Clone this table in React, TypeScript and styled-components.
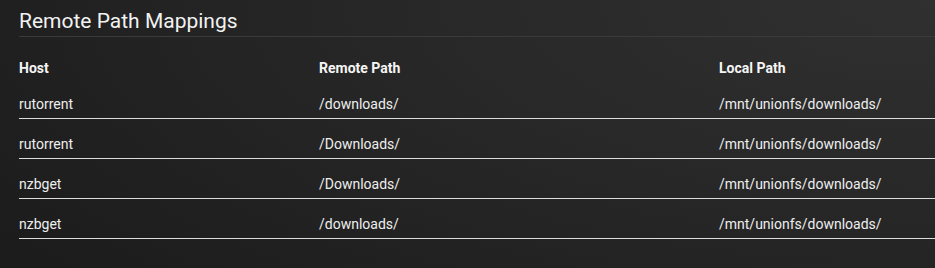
import React from 'react';
import styled, { createGlobalStyle } from 'styled-components';

const GlobalStyle = createGlobalStyle`
  html, body {
    margin: 0;
    padding: 0;
  }
  body {
    background: #1d1d1d;
    font-family: Roboto, "Liberation Sans", sans-serif;
  }
`;

type Mapping = {
  host: string;
  remotePath: string;
  localPath: string;
};

const mappings: Mapping[] = [
  { host: 'rutorrent', remotePath: '/downloads/', localPath: '/mnt/unionfs/downloads/' },
  { host: 'rutorrent', remotePath: '/Downloads/', localPath: '/mnt/unionfs/downloads/' },
  { host: 'nzbget', remotePath: '/Downloads/', localPath: '/mnt/unionfs/downloads/' },
  { host: 'nzbget', remotePath: '/downloads/', localPath: '/mnt/unionfs/downloads/' },
];

const App = () => {
  return (
    <Page>
      <GlobalStyle />
      <Section>
        <Legend>Remote Path Mappings</Legend>
        <Table>
          <HeaderRow>
            <HeadCell>Host</HeadCell>
            <HeadCell>Remote Path</HeadCell>
            <HeadCell>Local Path</HeadCell>
          </HeaderRow>
          {mappings.map((m, i) => (
            <Row key={i}>
              <Cell>{m.host}</Cell>
              <Cell>{m.remotePath}</Cell>
              <Cell>{m.localPath}</Cell>
            </Row>
          ))}
        </Table>
      </Section>
    </Page>
  );
};

const Page = styled.div`
  width: 935px;
  height: 268px;
  overflow: hidden;
  box-sizing: border-box;
  padding: 9px 0 0 19px;
  background: radial-gradient(ellipse 120% 160% at 100% 0%, #303030 0%, #282828 45%, #1c1c1c 100%);
`;

const Section = styled.div`
  display: flex;
  flex-direction: column;
`;

const Legend = styled.div`
  font-size: 21px;
  line-height: 24px;
  color: #f2f2f2;
  padding-bottom: 3px;
  border-bottom: 1px solid #3a3a3a;
`;

const Table = styled.div`
  display: flex;
  flex-direction: column;
  margin-top: 21px;
`;

const grid = `
  display: grid;
  grid-template-columns: 300px 400px 1fr;
  align-items: end;
`;

const HeaderRow = styled.div`
  ${grid}
  height: 21px;
  padding-bottom: 1px;
  box-sizing: border-box;
`;

const Row = styled.div`
  ${grid}
  height: 40px;
  box-sizing: border-box;
  padding-bottom: 4px;
  border-bottom: 1px solid #dcdcdc;
`;

const HeadCell = styled.div`
  font-size: 14px;
  line-height: 20px;
  font-weight: 700;
  color: #f5f5f5;
`;

const Cell = styled.div`
  font-size: 14px;
  line-height: 20px;
  color: #eeeeee;
  white-space: nowrap;
`;

export default App;
